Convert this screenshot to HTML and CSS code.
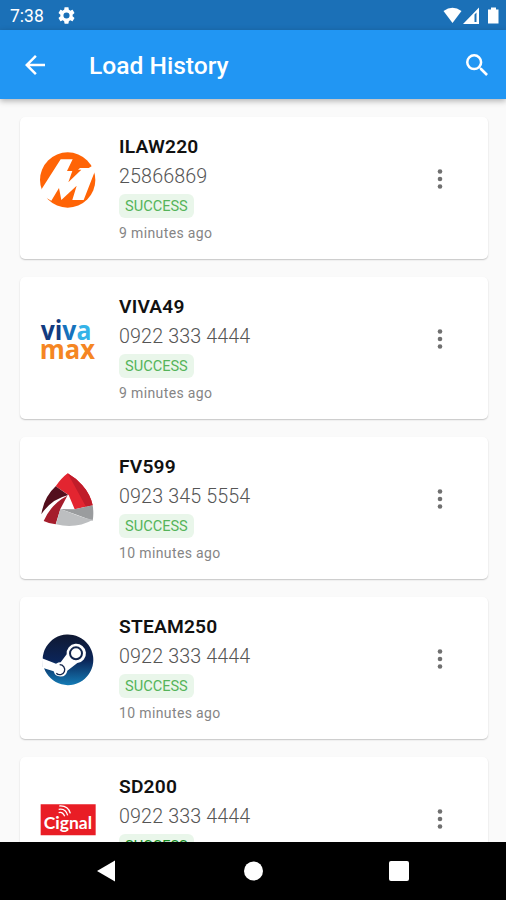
FILE: index.html
```html
<!DOCTYPE html>
<html lang="en">
<head>
<meta charset="utf-8">
<title>Load History</title>
<link rel="stylesheet" href="styles.css">
</head>
<body>
<div class="screen">
  <div class="status">
    <span class="clock">7:38</span>
    <svg class="gear" viewBox="2 2 20 20"><path d="M19.14 12.94c.04-.3.06-.61.06-.94s-.02-.64-.07-.94l2.03-1.58c.18-.14.23-.41.12-.61l-1.92-3.32c-.12-.22-.37-.29-.59-.22l-2.39.96c-.5-.38-1.03-.7-1.62-.94l-.36-2.54c-.04-.24-.24-.41-.48-.41h-3.84c-.24 0-.43.17-.47.41l-.36 2.54c-.59.24-1.13.57-1.62.94l-2.39-.96c-.22-.08-.47 0-.59.22L2.74 8.87c-.12.21-.08.47.12.61l2.03 1.58c-.05.3-.09.63-.09.94s.02.64.07.94l-2.03 1.58c-.18.14-.23.41-.12.61l1.92 3.32c.12.22.37.29.59.22l2.39-.96c.5.38 1.03.7 1.62.94l.36 2.54c.05.24.24.41.48.41h3.84c.24 0 .44-.17.47-.41l.36-2.54c.59-.24 1.13-.56 1.62-.94l2.39.96c.22.08.47 0 .59-.22l1.92-3.32c.12-.22.07-.47-.12-.61zM12 15.600A3.600 3.600 0 1 1 12 8.400a3.600 3.600 0 0 1 0 7.200z"/></svg>
    <svg class="signals" viewBox="0 0 60 20"><path d="M1.500 5Q10.500-1.500 19.500 5L10.500 17z"/><path fill-rule="evenodd" d="M37 1.500V18H21zM32.500 8.500v7.500h2V6.500z"/><path d="M49 1.500h5v2h2.500v14H46V3.500h3z"/></svg>
  </div>
  <header class="appbar">
    <svg class="back" viewBox="4 4 16 16"><path d="M20 11H7.830l5.590-5.590L12 4l-8 8 8 8 1.410-1.410L7.830 13H20z"/></svg>
    <h1>Load History</h1>
    <svg class="search" viewBox="3 3 17.500 17.500"><path d="M15.500 14h-.79l-.28-.27A6.470 6.470 0 0 0 16 9.500 6.500 6.500 0 1 0 9.500 16c1.610 0 3.090-.59 4.230-1.570l.27.28v.79l5 4.990L20.490 19zm-6 0a4.500 4.500 0 1 1 0-9 4.500 4.500 0 0 1 0 9z"/></svg>
  </header>
  <main class="list">
    <article class="card">
      <svg class="logo" viewBox="0 0 240 240"><circle cx="113" cy="120" r="83" fill="#ff6406"/><path fill="#fff" d="M92 58H128L111 93H127L115 127L154 89H144L150 84L176 84L190 76L197 88L161 180H127L140 137L94 180L87 144L64 182L26 161Z"/></svg>
      <div class="info"><h2>ILAW220</h2><p class="number">25866869</p><span class="badge">SUCCESS</span><p class="time">9 minutes ago</p></div>
      <svg class="more" viewBox="0 0 6 22"><circle cx="3" cy="3.500" r="2.300"/><circle cx="3" cy="11" r="2.300"/><circle cx="3" cy="18.500" r="2.300"/></svg>
    </article>
    <article class="card">
      <svg class="logo viva" viewBox="0 0 240 240"><text x="32" y="121" textLength="152" lengthAdjust="spacingAndGlyphs"><tspan fill="#123b80">vi</tspan><tspan fill="#1672bc">v</tspan><tspan fill="#35b3e8">a</tspan></text><text x="29" y="177" textLength="166" lengthAdjust="spacingAndGlyphs" fill="#f58623">max</text></svg>
      <div class="info"><h2>VIVA49</h2><p class="number">0922 333 4444</p><span class="badge">SUCCESS</span><p class="time">9 minutes ago</p></div>
      <svg class="more" viewBox="0 0 6 22"><circle cx="3" cy="3.500" r="2.300"/><circle cx="3" cy="11" r="2.300"/><circle cx="3" cy="18.500" r="2.300"/></svg>
    </article>
    <article class="card">
      <svg class="logo" viewBox="0 0 240 240"><path fill="#e32530" d="M77 79Q94 54 113 40Q139 55 157 76Q181 103 188 136L134 148L116 105Z"/><path fill="#c01c2a" d="M113 40Q139 55 157 76Q181 103 188 136L168 140Z"/><path fill="#530f1d" d="M77 79L115 105Q63 118 34 163Q42 111 77 79Z"/><path fill="#a51d2c" d="M112 107L91 147L77 193Q57 191 41 183Q64 131 112 107Z"/><path fill="#9a9c9e" d="M91 147L134 148L188 136Q192 161 188 182L142 165Z"/><path fill="#bcbec0" d="M91 147Q116 156 139 165Q163 175 189 179Q139 207 78 193Z"/></svg>
      <div class="info"><h2>FV599</h2><p class="number">0923 345 5554</p><span class="badge">SUCCESS</span><p class="time">10 minutes ago</p></div>
      <svg class="more" viewBox="0 0 6 22"><circle cx="3" cy="3.500" r="2.300"/><circle cx="3" cy="11" r="2.300"/><circle cx="3" cy="18.500" r="2.300"/></svg>
    </article>
    <article class="card">
      <svg class="logo" viewBox="0 0 240 240"><defs><linearGradient id="steam" x2="0" y2="1"><stop stop-color="#101932"/><stop offset=".5" stop-color="#0b2457"/><stop offset="1" stop-color="#147bb5"/></linearGradient></defs><path fill="url(#steam)" d="M38 116A76 76 0 1 1 42 144L38 140Z"/><path fill="#fff" d="M36 115L78 131Q85 127 92 127L110 103A29 29 0 1 1 142 129L112 152A21 21 0 0 1 71 154L37 143Z"/><g fill="none" stroke="#12254c"><circle cx="138" cy="100" r="18" stroke-width="6"/><path d="M79 160A15 15 0 1 0 89 134" stroke-width="4"/></g></svg>
      <div class="info"><h2>STEAM250</h2><p class="number">0922 333 4444</p><span class="badge">SUCCESS</span><p class="time">10 minutes ago</p></div>
      <svg class="more" viewBox="0 0 6 22"><circle cx="3" cy="3.500" r="2.300"/><circle cx="3" cy="11" r="2.300"/><circle cx="3" cy="18.500" r="2.300"/></svg>
    </article>
    <article class="card">
      <svg class="logo cignal" viewBox="0 0 240 240"><path fill="#e91d25" d="M32 73H197V166H32z"/><text x="41" y="148" textLength="145" lengthAdjust="spacingAndGlyphs">Cignal</text><g fill="none" stroke="#fff" stroke-width="4"><path d="M86 98Q98 94 104 109M86 88Q107 84 113 106M88 78Q114 76 121 100"/></g></svg>
      <div class="info"><h2>SD200</h2><p class="number">0922 333 4444</p><span class="badge dark">SUCCESS</span></div>
      <svg class="more" viewBox="0 0 6 22"><circle cx="3" cy="3.500" r="2.300"/><circle cx="3" cy="11" r="2.300"/><circle cx="3" cy="18.500" r="2.300"/></svg>
    </article>
  </main>
  <nav class="navbar">
    <svg viewBox="0 0 20 22"><path d="M18 .5v21L0 11z"/></svg>
    <svg viewBox="0 0 20 22"><circle cx="10.500" cy="11" r="9.500"/></svg>
    <svg viewBox="0 0 20 22"><rect y="1" width="20" height="20" rx="2"/></svg>
  </nav>
</div>
</body>
</html>
```
FILE: styles.css
```css
* { box-sizing: border-box; }
body { margin: 0; font-family: Roboto, sans-serif; background: #fafafa; }
h1, h2, p { margin: 0; }
svg { display: block; flex: none; }
.screen { height: 900px; display: flex; flex-direction: column; overflow: hidden; }
.status { height: 30px; flex: none; display: flex; align-items: center; padding: 1px 4px 0 10px; background: #1b70b7; color: #fff; fill: #fff; }
.clock { width: 48px; font-size: 17.500px; line-height: 30px; }
.gear { width: 17px; height: 17px; }
.signals { width: 60px; height: 20px; margin-left: auto; }
.appbar { height: 69px; flex: none; display: flex; align-items: center; padding: 0 18px 0 25px; background: #2196f3; color: #fff; fill: #fff; box-shadow: 0 2px 6px rgba(0,0,0,.3); position: relative; }
.back { width: 20px; height: 20px; }
h1 { margin-left: 44px; font-size: 24.600px; line-height: 30px; font-weight: 500; padding-top: 2px; }
.search { width: 22px; height: 22px; margin-left: auto; }
.list { flex: 1; min-height: 0; overflow: hidden; padding: 18px 18px 0 20px; display: flex; flex-direction: column; gap: 18px; }
.card { height: 142px; flex: none; display: flex; align-items: flex-start; background: #fff; border-radius: 5px; padding: 0 45px 0 10px; box-shadow: 0 1px 1.500px rgba(0,0,0,.22); }
.logo { width: 80px; height: 80px; margin-top: 23px; }
.info { margin: 16px 0 0 9px; flex: 1; display: flex; flex-direction: column; align-items: flex-start; }
h2 { font-size: 19.200px; line-height: 27px; font-weight: 600; color: #111; letter-spacing: .2px; }
.number { font-size: 19.700px; line-height: 30px; margin-top: 2px; font-weight: 300; color: #555; letter-spacing: .13px; }
.badge { height: 24px; margin-top: 2px; padding: 0 6px; border-radius: 6px; background: #e9f6ea; color: #55b45a; font-size: 14.600px; line-height: 25px; }
.dark { color: #128a1c; }
.time { margin-top: 5px; font-size: 14px; line-height: 20px; color: #858585; letter-spacing: .37px; }
.more { width: 6px; height: 22px; margin-top: 51px; fill: #707070; }
.viva { font: 700 79px "Open Sans", sans-serif; }
.cignal { font: 700 53px Lato, sans-serif; fill: #fff; }
.navbar { height: 58px; flex: none; padding: 0 97px; background: #000; fill: #fff; display: flex; align-items: center; justify-content: space-between; }
.navbar svg { width: 20px; height: 22px; }
```
